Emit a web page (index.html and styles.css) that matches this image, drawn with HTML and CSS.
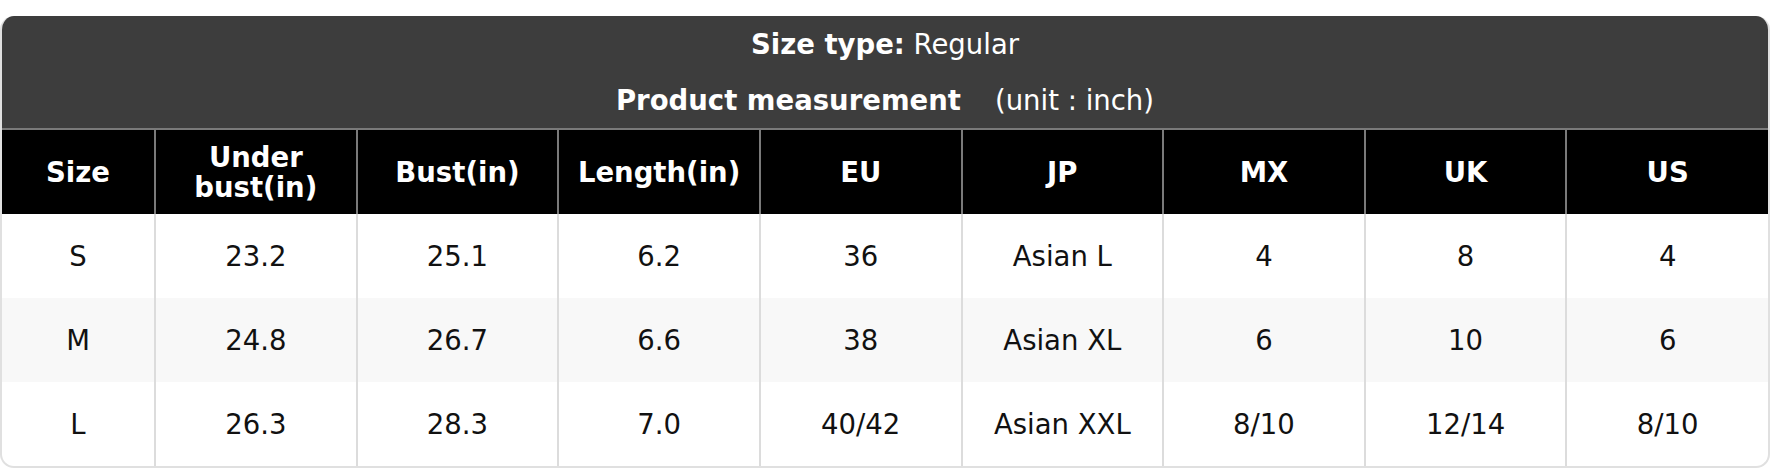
FILE: index.html
```html
<!DOCTYPE html>
<html lang="en">
<head>
<meta charset="utf-8">
<title>Size chart</title>
<link rel="stylesheet" href="styles.css">
</head>
<body>
<div class="card">
  <div class="caption">
    <p class="caption-line"><b>Size type:</b> Regular</p>
    <p class="caption-line"><b>Product measurement</b><span class="unit">(unit : inch)</span></p>
  </div>
  <table class="chart">
    <colgroup>
      <col class="col-first">
      <col><col><col><col><col><col><col><col>
    </colgroup>
    <thead>
      <tr>
        <th>Size</th>
        <th>Under<br>bust(in)</th>
        <th>Bust(in)</th>
        <th>Length(in)</th>
        <th>EU</th>
        <th>JP</th>
        <th>MX</th>
        <th>UK</th>
        <th>US</th>
      </tr>
    </thead>
    <tbody>
      <tr>
        <td>S</td><td>23.2</td><td>25.1</td><td>6.2</td><td>36</td><td>Asian L</td><td>4</td><td>8</td><td>4</td>
      </tr>
      <tr class="alt">
        <td>M</td><td>24.8</td><td>26.7</td><td>6.6</td><td>38</td><td>Asian XL</td><td>6</td><td>10</td><td>6</td>
      </tr>
      <tr>
        <td>L</td><td>26.3</td><td>28.3</td><td>7.0</td><td>40/42</td><td>Asian XXL</td><td>8/10</td><td>12/14</td><td>8/10</td>
      </tr>
    </tbody>
  </table>
</div>
</body>
</html>
```

FILE: styles.css
```css
html, body {
  margin: 0;
  padding: 0;
  background: #ffffff;
}

body {
  padding-top: 16px;
  font-family: "DejaVu Sans", Verdana, sans-serif;
}

.card {
  width: 1770px;
  box-sizing: border-box;
  border: 2px solid #e0e0e0;
  border-top: none;
  border-radius: 14px;
  overflow: hidden;
  background: #ffffff;
}

.caption {
  background: #3d3d3d;
  color: #ffffff;
  text-align: center;
  height: 112px;
  margin: 0 -2px;
}

.caption-line {
  margin: 0;
  font-size: 27.5px;
  line-height: 56px;
}

.unit {
  margin-left: 34px;
}

.chart {
  width: 100%;
  border-collapse: collapse;
  table-layout: fixed;
}

.col-first {
  width: 153px;
}

.chart th {
  background: #000000;
  color: #ffffff;
  font-weight: bold;
  font-size: 27.5px;
  line-height: 30px;
  height: 84px;
  padding: 0 4px;
  border-left: 2px solid #7a7a7a;
  border-top: 2px solid #7a7a7a;
  text-align: center;
  vertical-align: middle;
}

.chart td {
  color: #111111;
  font-size: 27.5px;
  height: 84px;
  padding: 0 4px;
  text-align: center;
  vertical-align: middle;
  border-left: 2px solid #dcdcdc;
}

.chart th:first-child,
.chart td:first-child {
  border-left: none;
}

.chart tr.alt td {
  background: #f8f8f8;
}
```
